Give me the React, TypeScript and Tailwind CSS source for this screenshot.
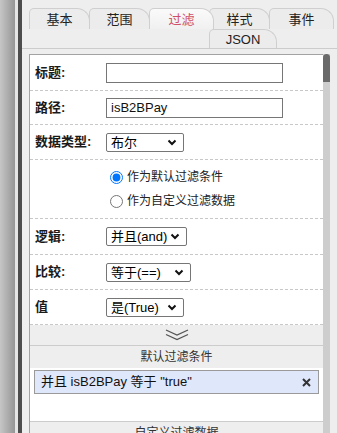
import React from "react";

const font = "font-['Liberation_Sans','Noto_Sans_CJK_SC',sans-serif]";

function Chevron() {
  return (
    <svg width="10" height="7" viewBox="0 0 10 7" className="ml-auto">
      <polyline points="1.5,1.5 5,5 8.5,1.5" fill="none" stroke="#111" strokeWidth="2" />
    </svg>
  );
}

function Select({ value, width }: { value: string; width: string }) {
  return (
    <div
      className={`flex h-[19px] items-center rounded-[2px] border border-[#767676] bg-white pl-[4px] pr-[6px] text-[13px] leading-none text-black ${width}`}
    >
      <span>{value}</span>
      <Chevron />
    </div>
  );
}

function Row({
  label,
  children,
  h,
}: {
  label: string;
  children: React.ReactNode;
  h: string;
}) {
  return (
    <div className={`flex items-center border-b border-dashed border-[#c8c8c8] ${h}`}>
      <div className="w-[76px] pl-[5px] text-[13px] font-bold text-[#1a1a1a]">{label}</div>
      {children}
    </div>
  );
}

function Tab({
  label,
  active,
  className,
}: {
  label: string;
  active?: boolean;
  className: string;
}) {
  return (
    <div
      className={`relative flex items-center justify-center rounded-tl-[5px] rounded-tr-[13px] border border-b-0 border-[#cfcfcf] text-[13px] leading-none ${
        active
          ? "z-10 bg-gradient-to-b from-[#fafafa] to-[#f0f0f0] text-[#d0506a]"
          : "bg-[#ececec] text-[#222]"
      } ${className}`}
    >
      {label}
    </div>
  );
}

export default function App() {
  return (
    <div className={`flex h-[433px] w-[337px] overflow-hidden bg-[#eeeeee] ${font}`}>
      <div className="w-[15px] bg-gradient-to-r from-[#c6c6c6] to-[#969696]" />
      <div className="w-[3px] bg-[#e6e6e6]" />
      <div className="w-[4px] bg-[#4d4d4d]" />
      <div className="flex flex-1 flex-col">
        <div className="ml-[1px] mr-[4px] mt-[3px] h-[3px] bg-[#454545]" />
        {/* tabs */}
        <div className="mt-[5px] border-b border-[#cccccc] pl-[7px]">
          <div className="flex h-[21px]">
            <Tab label="基本" className="w-[61px]" />
            <Tab label="范围" className="-ml-px w-[61px]" />
            <Tab label="过滤" active className="-ml-px w-[65px]" />
            <Tab label="样式" className="-ml-[5px] w-[61px]" />
            <Tab label="事件" className="-ml-px w-[65px]" />
          </div>
          <div className="flex h-[19px] pl-[180px]">
            <Tab label="JSON" className="w-[68px] text-[#1f2d4a]" />
          </div>
        </div>
        {/* content */}
        <div className="mt-[5px] flex flex-1 pl-[7px]">
          <div className="flex w-[294px] flex-col border-l border-t border-[#a3a3a3] bg-white">
            <Row label="标题:" h="h-[36px]">
              <div className="h-[20px] w-[177px] border border-[#767676] bg-white" />
            </Row>
            <Row label="路径:" h="h-[34px]">
              <div className="flex h-[20px] w-[177px] items-center border border-[#767676] bg-white pl-[4px] text-[13px] text-[#111]">
                isB2BPay
              </div>
            </Row>
            <Row label="数据类型:" h="h-[35px]">
              <Select value="布尔" width="w-[78px]" />
            </Row>
            <div className="flex h-[59px] flex-col justify-center gap-[11px] border-b border-dashed border-[#c8c8c8] pl-[80px] text-[12px] leading-none text-[#222]">
              <label className="flex items-center gap-[4px]">
                <input type="radio" name="r" defaultChecked className="m-0 h-[13px] w-[13px]" />
                作为默认过滤条件
              </label>
              <label className="flex items-center gap-[4px]">
                <input type="radio" name="r" className="m-0 h-[13px] w-[13px]" />
                作为自定义过滤数据
              </label>
            </div>
            <Row label="逻辑:" h="h-[36px]">
              <Select value="并且(and)" width="w-[81px]" />
            </Row>
            <Row label="比较:" h="h-[35px]">
              <Select value="等于(==)" width="w-[85px]" />
            </Row>
            <Row label="值" h="h-[35px]">
              <Select value="是(True)" width="w-[78px]" />
            </Row>
            <div className="flex h-[21px] items-center justify-center border-b border-[#cccccc] bg-[#eeeeee]">
              <svg width="24" height="12" viewBox="0 0 24 12">
                <polyline points="1,1 12,6 23,1" fill="none" stroke="#555" strokeWidth="1.3" />
                <polyline points="1,5.5 12,10.5 23,5.5" fill="none" stroke="#555" strokeWidth="1.3" />
              </svg>
            </div>
            <div className="flex h-[22px] items-center justify-center bg-[#eeeeee] text-[12px] leading-none text-[#333]">
              默认过滤条件
            </div>
            <div className="h-[54px] border-b border-[#cccccc] bg-white px-[4px] pt-[2px]">
              <div className="flex h-[24px] items-center border border-[#9a9a9a] bg-[#dfe7fb] pl-[6px] pr-[7px] text-[13px] text-[#111]">
                <span>并且 isB2BPay 等于 "true"</span>
                <svg width="9" height="9" viewBox="0 0 9 9" className="ml-auto">
                  <path d="M1 1L8 8M8 1L1 8" stroke="#333" strokeWidth="2" />
                </svg>
              </div>
            </div>
            <div className="flex h-[22px] items-center justify-center bg-[#eeeeee] text-[12px] leading-none text-[#333]">
              自定义过滤数据
            </div>
          </div>
          <div className="flex w-[7px] flex-col bg-[#cdcdcd]">
            <div className="h-[28px] rounded-t-[4px] bg-[#6a6a6a]" />
          </div>
        </div>
      </div>
    </div>
  );
}
